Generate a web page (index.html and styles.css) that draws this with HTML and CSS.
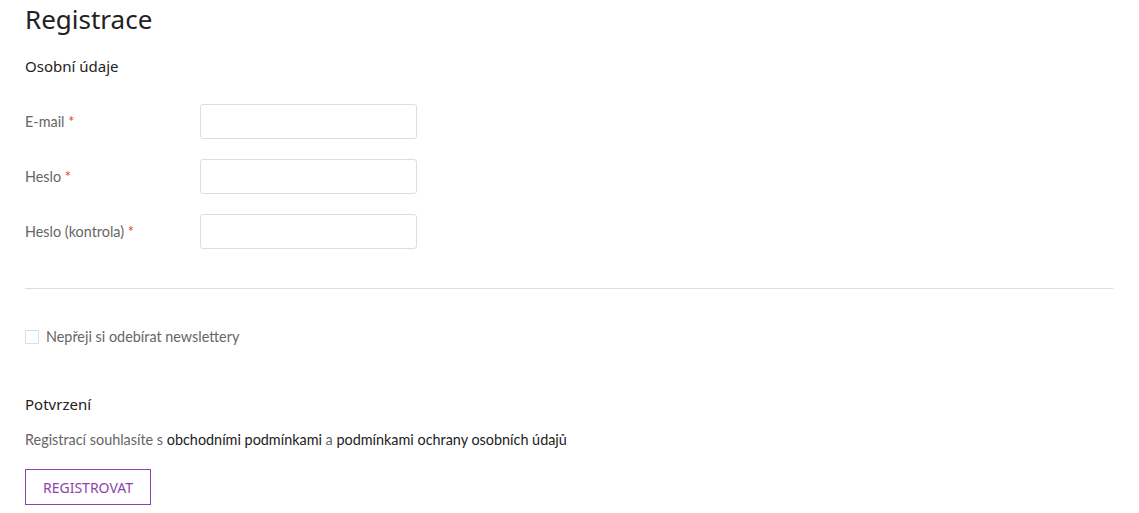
FILE: index.html
```html
<!DOCTYPE html>
<html lang="cs">
<head>
    <meta charset="UTF-8">
    <meta name="viewport" content="width=device-width, initial-scale=1.0">
    <title>Registrace</title>
    <link rel="stylesheet" href="styles.css">
</head>
<body>
    <div class="page">
        <h1 class="page-title">Registrace</h1>

        <!-- Personal data -->
        <h2 class="section-title">Osobní údaje</h2>
        <form class="register-form">
            <div class="form-row">
                <label for="email">E-mail <span class="required">*</span></label>
                <input type="email" id="email">
            </div>
            <div class="form-row">
                <label for="password">Heslo <span class="required">*</span></label>
                <input type="password" id="password">
            </div>
            <div class="form-row">
                <label for="password-check">Heslo (kontrola) <span class="required">*</span></label>
                <input type="password" id="password-check">
            </div>

            <hr class="divider">

            <label class="checkbox-row">
                <input type="checkbox">
                <span>Nepřeji si odebírat newslettery</span>
            </label>

            <!-- Confirmation -->
            <h2 class="section-title confirm-title">Potvrzení</h2>
            <p class="terms">Registrací souhlasíte s <a href="#">obchodními podmínkami</a> a <a href="#">podmínkami ochrany osobních údajů</a></p>

            <button type="submit" class="submit-btn">REGISTROVAT</button>
        </form>
    </div>
</body>
</html>
```

FILE: styles.css
```css
body {
    margin: 0;
    padding: 0;
    background-color: white;
    color: #666;
    font-family: Lato, "Open Sans", sans-serif;
    font-size: 14.4px;
}

.page {
    padding: 0 26px 0 25px;
}

.page-title {
    margin: 0;
    padding-top: 4px;
    font-family: "Noto Sans", sans-serif;
    font-weight: normal;
    font-size: 26px;
    line-height: 30px;
    color: #222;
}

.section-title {
    margin: 22px 0 0;
    font-family: "Noto Sans", sans-serif;
    font-weight: normal;
    font-size: 15px;
    line-height: 20px;
    color: #222;
}

.register-form {
    margin-top: 28px;
}

/* Label + input rows */
.form-row {
    display: flex;
    align-items: center;
    margin-bottom: 20px;
}

.form-row label {
    width: 175px;
}

.form-row input {
    width: 217px;
    height: 35px;
    box-sizing: border-box;
    border: 1px solid #ddd;
    border-radius: 3px;
    padding: 0 10px;
    font-size: 14px;
}

.required {
    color: #e0452a;
}

.divider {
    border: none;
    border-top: 1px solid #ddd;
    margin: 39px 0 0;
}

.checkbox-row {
    display: flex;
    align-items: center;
    margin-top: 39px;
    cursor: pointer;
}

.checkbox-row input {
    appearance: none;
    width: 14px;
    height: 14px;
    margin: 0 7px 0 0;
    border: 1px solid #ddd;
    background: white;
}

.confirm-title {
    margin-top: 49px;
}

.terms {
    margin: 16px 0 0;
    line-height: 20px;
}

.terms a {
    color: #222;
    text-decoration: none;
}

.submit-btn {
    margin-top: 19px;
    width: 126px;
    height: 36px;
    background: white;
    border: 1px solid #8e44ad;
    color: #8e44ad;
    font-family: "Noto Sans", sans-serif;
    font-size: 14px;
    cursor: pointer;
}
```
